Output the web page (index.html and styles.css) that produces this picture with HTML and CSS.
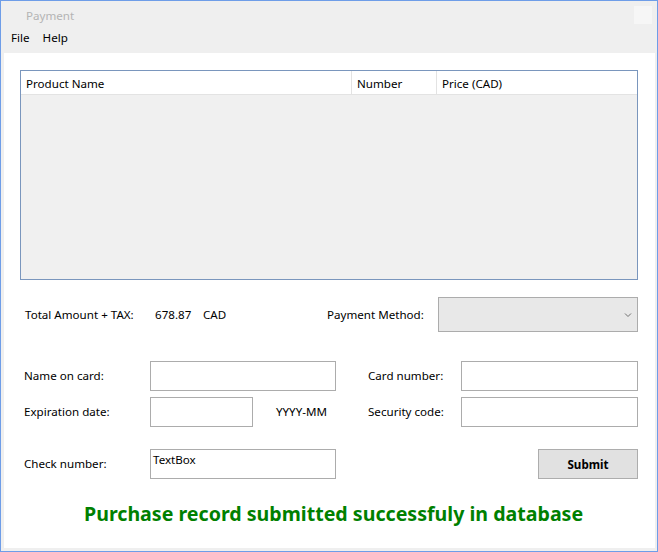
FILE: index.html
```html
<!DOCTYPE html>
<html>
<head>
<meta charset="utf-8">
<link rel="stylesheet" href="styles.css">
</head>
<body>
<div class="window">
  <div class="titlebar">
    <span class="title">Payment</span>
    <span class="closebox"></span>
  </div>
  <div class="menubar">
    <span class="menu-item file">File</span>
    <span class="menu-item help">Help</span>
  </div>
  <div class="content">
    <div class="listview">
      <div class="lv-header">
        <div class="lv-col c1">Product Name</div>
        <div class="lv-col c2">Number</div>
        <div class="lv-col c3">Price (CAD)</div>
      </div>
      <div class="lv-body"></div>
    </div>

    <div class="row row-total">
      <span>Total Amount + TAX:</span>
      <span>678.87</span>
      <span>CAD</span>
      <span>Payment Method:</span>
      <div class="combo">
        <svg class="chev" width="8" height="6" viewBox="0 0 8 6"><path d="M1 1.5 L4 4.5 L7 1.5" fill="none" stroke="#707070" stroke-width="1"/></svg>
      </div>
    </div>

    <div class="row row-name">
      <span>Name on card:</span>
      <div class="textbox"></div>
      <span></span>
      <span>Card number:</span>
      <div class="textbox"></div>
    </div>

    <div class="row row-exp">
      <span>Expiration date:</span>
      <div class="textbox"></div>
      <span></span>
      <span>YYYY-MM</span>
      <span>Security code:</span>
      <div class="textbox"></div>
    </div>

    <div class="row row-check">
      <span>Check number:</span>
      <div class="textbox tb-text">TextBox</div>
      <span></span>
      <button class="submit">Submit</button>
    </div>

    <div class="message">Purchase record submitted successfuly in database</div>
  </div>
  <div class="bottomframe"></div>
</div>
</body>
</html>
```

FILE: styles.css
```css
html, body {
  margin: 0;
  padding: 0;
  background: #ffffff;
}
body {
  width: 658px;
  height: 552px;
  overflow: hidden;
  font-family: "Segoe UI", "Noto Sans", "Open Sans", sans-serif;
  font-size: 11.6px;
  color: #000;
}
.window {
  box-sizing: border-box;
  width: 658px;
  height: 552px;
  border: 1px solid #6e9de8;
  background: #efefef;
  display: flex;
  flex-direction: column;
}
.titlebar {
  height: 26px;
  display: flex;
  align-items: center;
  justify-content: space-between;
  padding: 0 5px 0 25px;
}
.title {
  color: #b4b4b4;
  font-size: 11.6px;
  margin-top: 3px;
}
.closebox {
  width: 18px;
  height: 18px;
  background: #f6f6f6;
  margin-top: 2px;
}
.menubar {
  height: 20px;
  margin-bottom: 6px;
  display: flex;
  align-items: center;
  padding-left: 10px;
  gap: 13px;
}
.content {
  flex: 1;
  background: #ffffff;
  margin: 0 2px 0 3px;
  padding: 17px 0 0 16px;
  display: flex;
  flex-direction: column;
}
.listview {
  box-sizing: border-box;
  width: 618px;
  height: 210px;
  border: 1px solid #7a96bd;
  display: flex;
  flex-direction: column;
}
.lv-header {
  height: 23px;
  background: #ffffff;
  border-bottom: 1px solid #e3e3e3;
  display: grid;
  grid-template-columns: 331px 85px 1fr;
}
.lv-col {
  padding-left: 5px;
  padding-top: 1px;
  display: flex;
  align-items: center;
  border-right: 1px solid #e3e3e3;
}
.lv-col.c3 {
  border-right: none;
}
.lv-body {
  flex: 1;
  background: #f0f0f0;
}
.row {
  display: grid;
  align-items: center;
}
.row-total {
  margin-top: 17px;
  height: 35px;
  padding-left: 5px;
  grid-template-columns: 130px 48px 124px 111px 200px;
}
.combo {
  box-sizing: border-box;
  height: 35px;
  background: #e8e8e8;
  border: 1px solid #acacac;
  position: relative;
}
.chev {
  position: absolute;
  right: 5px;
  top: 14px;
}
.textbox {
  box-sizing: border-box;
  height: 30px;
  border: 1px solid #acacac;
  background: #fff;
}
.tb-text {
  padding: 2px 0 0 2px;
  align-self: stretch;
}
.row-name {
  margin-top: 29px;
  height: 30px;
  padding-left: 4px;
  grid-template-columns: 126px 186px 32px 93px 177px;
}
.row-name > span, .row-exp > span, .row-check > span {
  margin-top: -1px;
}
.row-exp {
  margin-top: 6px;
  height: 30px;
  padding-left: 4px;
  grid-template-columns: 126px 103px 23px 92px 93px 177px;
}
.row-check {
  margin-top: 22px;
  height: 30px;
  padding-left: 4px;
  grid-template-columns: 126px 186px 202px 100px;
}
.submit {
  box-sizing: border-box;
  height: 30px;
  width: 100px;
  background: #e1e1e1;
  border: 1px solid #adadad;
  font-family: "Segoe UI", "Noto Sans", "Open Sans", sans-serif;
  font-size: 11.6px;
  font-weight: bold;
  color: #000;
  padding: 0;
}
.message {
  margin-top: 22px;
  padding-left: 64px;
  color: #008000;
  font-size: 19.6px;
  font-weight: bold;
  line-height: 26px;
}
.bottomframe {
  height: 3px;
}
```
